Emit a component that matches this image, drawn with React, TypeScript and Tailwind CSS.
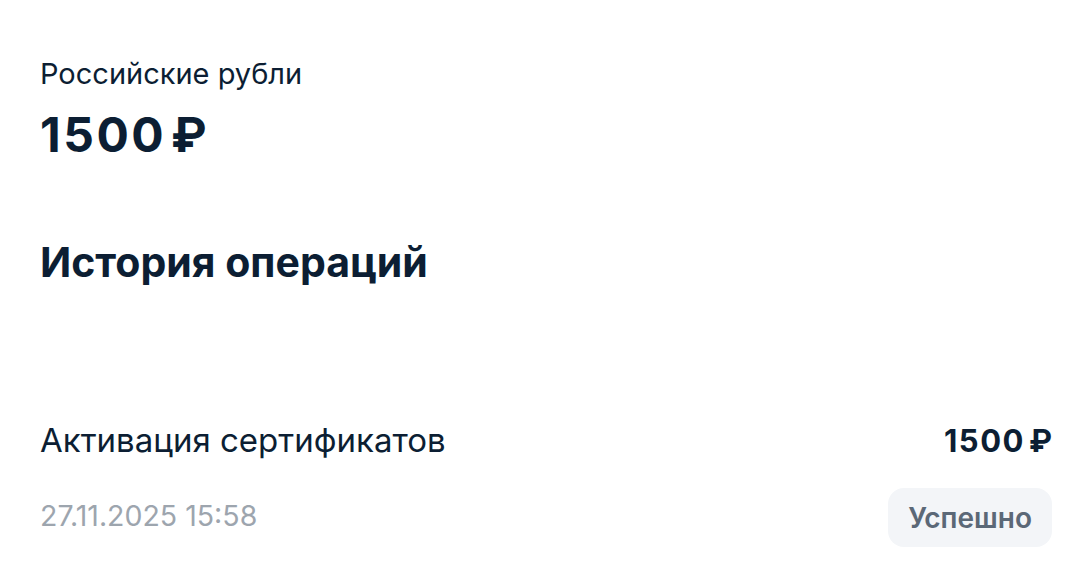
import React from "react";

const Amount = ({ value, size }: { value: string; size: "lg" | "md" }) =>
  size === "lg" ? (
    <p className="text-[48px] leading-[56px] font-bold mt-[15px] flex">
      <span className="tracking-[2.5px]">{value}</span>
      <span className="ml-[5px]">₽</span>
    </p>
  ) : (
    <p className="text-[31px] leading-[40px] font-bold mt-[1px] flex">
      <span className="tracking-[1.5px]">{value}</span>
      <span className="ml-[4px]">₽</span>
    </p>
  );

const App = () => {
  return (
    <div
      className="w-[1090px] h-[568px] bg-white text-[#0c1e33] pl-[40px] pr-[38px] pt-[56px] overflow-hidden"
      style={{ fontFamily: "Inter, 'Noto Sans', sans-serif" }}
    >
      <p className="text-[29px] leading-[36px]">Российские рубли</p>
      <Amount value="1500" size="lg" />

      <h2 className="text-[41px] leading-[48px] font-bold mt-[75px]">История операций</h2>

      <div className="mt-[134px] flex items-start justify-between">
        <div>
          <p className="text-[33px] leading-[40px]">Активация сертификатов</p>
          <p className="text-[28.5px] leading-[36px] text-[#9da5ae] mt-[38px]">27.11.2025 15:58</p>
        </div>
        <div className="flex flex-col items-end">
          <Amount value="1500" size="md" />
          <span className="mt-[27px] bg-[#f3f5f8] text-[#5b6877] text-[28px] font-semibold rounded-[16px] px-[20px] h-[59px] flex items-center">
            Успешно
          </span>
        </div>
      </div>
    </div>
  );
};

export default App;
